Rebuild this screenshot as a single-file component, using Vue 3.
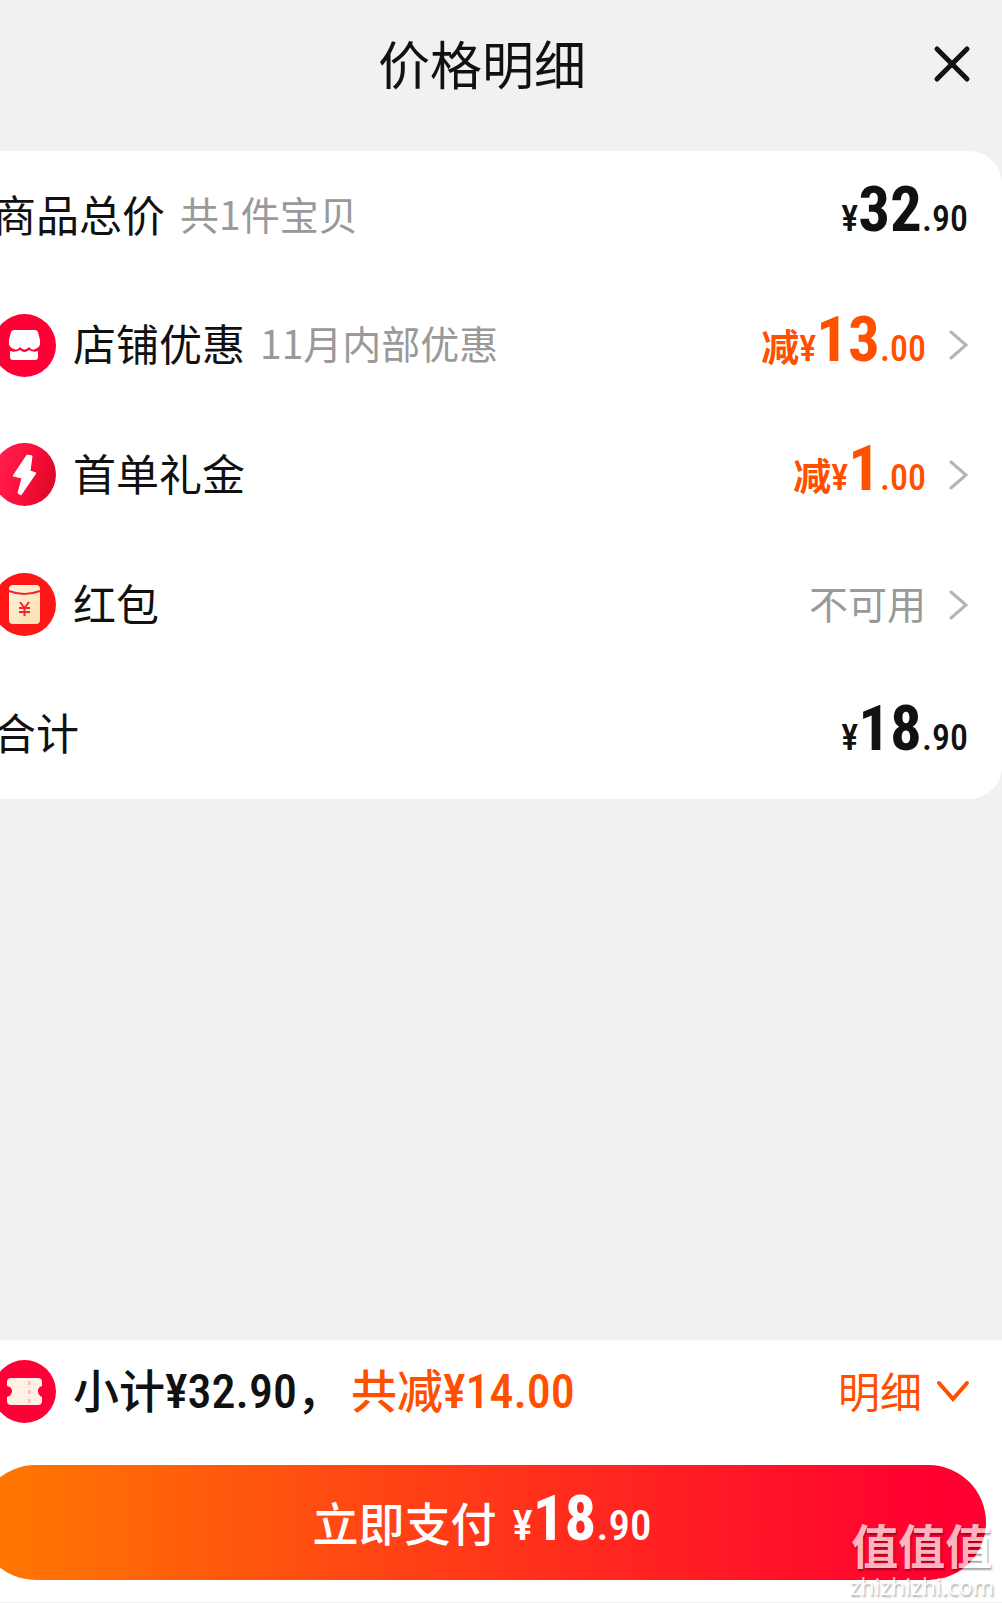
<template>
  <main class="sheet">
    <!-- 标题栏 -->
    <header class="header">
      <h1 class="title">价格明细</h1>
      <button class="close" type="button" aria-label="关闭" @click="closed = true">
        <svg width="38" height="38" viewBox="0 0 38 38">
          <path d="M4 4 L34 34 M34 4 L4 34" />
        </svg>
      </button>
    </header>

    <!-- 价格列表 -->
    <ul class="card">
      <li v-for="row in rows" :key="row.label" class="row">
        <svg v-if="row.icon === 'shop'" class="icon" viewBox="0 0 63 63">
          <circle cx="31.5" cy="31.5" r="31.5" fill="#ff0036" />
          <path d="M21 16 H42 Q44 16 45 18 L47 26 Q48 34 42 35 Q39 37 36 33 Q31.500 38 27 33 Q24 37 21 35 Q15 34 16 26 L18 18 Q19 16 21 16 Z" fill="#fff" />
          <path d="M17 37 Q22 39 27 36 Q31.500 40 36 36 Q41 39 45 37 V43 Q45 46 42 46 H20 Q17 46 17 43 Z" fill="#fff" />
        </svg>
        <svg v-else-if="row.icon === 'flash'" class="icon" viewBox="0 0 63 63">
          <defs>
            <linearGradient id="flash" x1="0" y1="0.200" x2="1" y2="0.500">
              <stop offset="0" stop-color="#ff2350" />
              <stop offset="0.600" stop-color="#fb0d3a" />
              <stop offset="1" stop-color="#dc0a28" />
            </linearGradient>
          </defs>
          <circle cx="31.5" cy="31.5" r="31.5" fill="url(#flash)" />
          <path d="M34 12 L39 13 L37 28 L43 30 L28 52 L25 50 L29 35 L20 33 Z" fill="#fff" stroke="#fff" stroke-linejoin="round" />
        </svg>
        <svg v-else-if="row.icon === 'packet'" class="icon" viewBox="0 0 63 63">
          <defs>
            <linearGradient id="packet" x1="0" y1="0" x2="1" y2="1">
              <stop offset="0" stop-color="#fff4e0" />
              <stop offset="1" stop-color="#fbdfae" />
            </linearGradient>
          </defs>
          <circle cx="31.5" cy="31.5" r="31.5" fill="#ff1717" />
          <rect x="16" y="12" width="31" height="39" rx="4" fill="url(#packet)" />
          <path d="M16 18 Q31 24 47 18" fill="none" stroke="#f0282c" stroke-width="2" />
          <path d="M27 29 L31.500 35 L36 29 M26 35 H37 M26 39 H37 M31.500 35 V43" fill="none" stroke="#f0282c" stroke-width="2" />
        </svg>
        <span class="label">{{ row.label }}</span>
        <span v-if="row.note" class="note">{{ row.note }}</span>

        <button v-if="row.link" class="link" type="button">
          <span v-if="row.off" class="amount off">
            <span class="cut">减</span><span class="yen">¥</span><span class="int">{{ row.int }}</span><span class="dec">{{ row.dec }}</span>
          </span>
          <span v-else class="note">不可用</span>
          <svg class="arrow" width="20" height="32" viewBox="0 0 20 32">
            <path d="M3 3 L18 16 L3 29" />
          </svg>
        </button>
        <span v-else class="amount">
          <span class="yen">¥</span><span class="int">{{ row.int }}</span><span class="dec">{{ row.dec }}</span>
        </span>
      </li>
    </ul>

    <!-- 底部结算 -->
    <footer class="footer">
      <div class="summary">
        <svg class="icon" viewBox="0 0 63 63">
          <circle cx="31.5" cy="31.5" r="31.5" fill="#ff0036" />
          <path d="M18 18 H45 Q49 18 49 22 V26 Q45 27 45 31 Q45 35 49 37 V41 Q49 45 45 45 H18 Q14 45 14 41 V37 Q19 35 19 31 Q19 27 14 26 V22 Q14 18 18 18 Z" fill="#fff0e8" />
          <path d="M36.500 21 V43" stroke="#ffc4b8" stroke-width="3" stroke-dasharray="4 5" />
        </svg>
        <span class="subtotal">小计<span class="num">¥32.90</span>，</span>
        <span class="saved">共减<span class="num">¥14.00</span></span>
        <button class="detail" type="button" @click="open = !open">
          <span>明细</span>
          <svg width="34" height="24" viewBox="0 0 34 24">
            <path d="M3 3 L17 19 L31 3" />
          </svg>
        </button>
      </div>
      <button class="pay" type="button">
        <span class="pay-text">立即支付</span>
        <span class="amount">
          <span class="yen">¥</span><span class="int">18</span><span class="dec">.90</span>
        </span>
      </button>
    </footer>

    <div class="mark">
      <span class="mark-name">值值值</span>
      <span class="mark-site">zhizhizhi.com</span>
    </div>
  </main>
</template>

<script setup>
import { ref } from 'vue';

const closed = ref(false);
const open = ref(true);

// 价格明细的每一行
const rows = [
  { label: '商品总价', note: '共1件宝贝', int: '32', dec: '.90' },
  { label: '店铺优惠', note: '11月内部优惠', icon: 'shop', off: true, int: '13', dec: '.00', link: true },
  { label: '首单礼金', icon: 'flash', off: true, int: '1', dec: '.00', link: true },
  { label: '红包', icon: 'packet', link: true },
  { label: '合计', int: '18', dec: '.90' },
];
</script>

<style>
body {
  background: #f1f1f1;
  overflow-x: hidden;
}
</style>

<style scoped>
.sheet {
  position: relative;
  display: flex;
  flex-direction: column;
  min-height: 100vh;
  margin-left: -38px;
  color: #111;
  background: #f1f1f1;
  font-family: "Noto Sans CJK SC", sans-serif;
}

button {
  padding: 0;
  border: none;
  background: none;
  color: inherit;
  font: inherit;
  cursor: pointer;
}

svg {
  flex: none;
}

.header {
  display: grid;
  grid-template-columns: 1fr auto 1fr;
  align-items: center;
  height: 127px;
  padding: 0 31px 24px;
}

.title {
  grid-column: 2;
  margin: 0;
  padding-bottom: 2px;
  font-size: 52px;
  font-weight: 400;
  line-height: 60px;
}

.close {
  display: flex;
  justify-self: end;
}

.close path {
  stroke: #111;
  stroke-width: 5;
  stroke-linecap: round;
}

.card {
  display: grid;
  grid-auto-rows: 1fr;
  min-height: 648px;
  margin: 0;
  padding: 0 34px 0 31px;
  border-radius: 33px;
  background: #fff;
  list-style: none;
}

.row {
  display: flex;
  align-items: center;
}

.icon {
  width: 63px;
  height: 63px;
  margin-right: 17px;
}

.label {
  padding-bottom: 6px;
  font-size: 43px;
  line-height: 60px;
}

.note {
  padding-bottom: 6px;
  color: #999;
  font-size: 39px;
  line-height: 60px;
}

.label + .note {
  margin-left: 15px;
}

.link {
  display: flex;
  align-items: center;
  gap: 22px;
  margin-left: auto;
}

.arrow path {
  fill: none;
  stroke: #b4b4b4;
  stroke-width: 3;
  stroke-linecap: round;
}

.amount {
  display: flex;
  align-items: baseline;
  margin-left: auto;
  padding-bottom: 2px;
  font-family: "Roboto Condensed", Roboto, "Noto Sans CJK SC", sans-serif;
  font-size: 36px;
  font-weight: 500;
  line-height: 60px;
}

.int {
  font-size: 63px;
  font-weight: 700;
}

.off {
  color: #ff5000;
}

.cut {
  font-size: 38px;
  font-weight: 700;
}

.footer {
  margin-top: auto;
  padding: 20px 16px 22px;
  border-bottom: 1px solid #f1f1f1;
  background: #fff;
}

.summary {
  display: flex;
  align-items: center;
  height: 63px;
  padding: 0 16px 0 15px;
  font-size: 46px;
  font-weight: 500;
  line-height: 60px;
}

.subtotal,
.saved,
.detail span,
.pay-text {
  padding-bottom: 4px;
}

.num {
  font-family: "Roboto Condensed", Roboto, sans-serif;
  font-size: 48px;
}

.saved {
  margin-left: 8px;
  color: #ff5000;
}

.detail {
  display: flex;
  align-items: center;
  gap: 14px;
  margin-left: auto;
  color: #ff5000;
  font-size: 42px;
  font-weight: 400;
}

.detail path {
  fill: none;
  stroke: #ff5000;
  stroke-width: 4;
  stroke-linecap: round;
}

.pay {
  display: flex;
  align-items: center;
  justify-content: center;
  gap: 16px;
  width: 100%;
  height: 115px;
  margin-top: 42px;
  border-radius: 58px;
  background: linear-gradient(90deg, #ff7a00, #ff2a1e 60%, #ff0030 95%);
  color: #fff;
  font-size: 46px;
  font-weight: 500;
}

.pay .amount {
  margin-left: 0;
  font-size: 43px;
}

/* 右下角水印 */
.mark {
  position: absolute;
  right: 8px;
  bottom: 2px;
  display: flex;
  flex-direction: column;
  align-items: center;
  color: #fff;
  opacity: 0.7;
  text-shadow: 1px 2px 2px rgba(0, 0, 0, 0.5);
  pointer-events: none;
}

.mark-name {
  font-size: 47px;
  font-weight: 700;
  line-height: 54px;
}

.mark-site {
  font-family: "Open Sans", sans-serif;
  font-size: 23px;
  line-height: 30px;
}
</style>
